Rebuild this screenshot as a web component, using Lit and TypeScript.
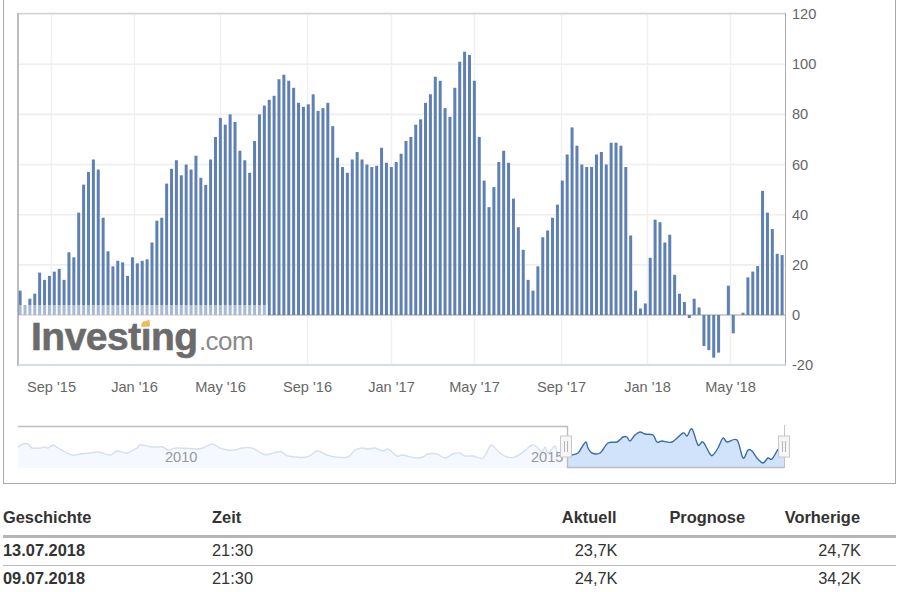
import { LitElement, html, css, svg } from "lit";
import { customElement } from "lit/decorators.js";

// wochenwerte, von links nach rechts
const VALUES = [
  9.7, 4, 6.5, 8.5, 16.9, 14, 15.6, 17.3, 18.4, 14, 25, 23, 40.8, 52, 57, 62, 58, 38.8, 25.4, 19.4,
  21.6, 21, 15.6, 23, 20.6, 21.6, 22.2, 28.9, 37.6, 38.8, 52.4, 58.3, 61.7, 55.7, 60, 58, 63.5, 54.7, 51.9, 62,
  71, 78.6, 75.9, 80, 77, 65.5, 61.7, 56.7, 69.4, 80, 83.5, 85.8, 87.4, 94, 95.8, 93.4, 90.6, 84.6, 83, 84,
  88, 81.4, 82.5, 84.6, 75.3, 62.7, 59, 56.7, 62, 65, 62, 60, 59, 59.5, 66.7, 60.7, 59, 61, 64.3, 69.4,
  71, 75.9, 78, 84.6, 88, 95, 93.4, 82.5, 79, 90.6, 101, 105, 103.7, 93.4, 71, 53.6, 43, 51, 61, 65.5,
  60.7, 46.4, 35, 26, 14, 9.7, 19.4, 31, 33.7, 38.8, 44, 53.6, 64, 74.8, 67.5, 60, 59, 59, 64, 65,
  60, 68.7, 68.7, 67.5, 59, 31.7, 9.7, 2.6, 4.6, 22.8, 38, 37, 28.9, 32, 16, 8.5, 5.2, -1.2, 6.5, 3,
  -12.4, -14, -17, -15, 0, 11.7, -7.3, 0, 0.9, 15, 17.3, 19.5, 49.5, 40.8, 34.3, 24.4, 23.9,
];

const Y_LABELS = [120, 100, 80, 60, 40, 20, 0, -20];
const X_TICKS: [number, string][] = [
  [51.5, "Sep '15"],
  [134.5, "Jan '16"],
  [220.5, "May '16"],
  [307.5, "Sep '16"],
  [391.5, "Jan '17"],
  [474.5, "May '17"],
  [561.5, "Sep '17"],
  [647.5, "Jan '18"],
  [730.5, "May '18"],
];

const OLD_LINE: number[][] = [
  [18, 447], [23, 444], [28, 444], [32, 448], [40, 448], [45, 447], [48, 448], [53, 445], [58, 448], [72, 455],
  [80, 454], [90, 453], [98, 452], [110, 455], [117, 451], [127, 453], [137, 448], [140, 445], [147, 446], [152, 447],
  [157, 447], [163, 447], [168, 450], [177, 448], [197, 449], [203, 448], [212, 444], [220, 448], [227, 450], [235, 450],
  [242, 448], [252, 448], [263, 454], [270, 454], [277, 452], [282, 452], [288, 456], [307, 457], [317, 451], [327, 455],
  [335, 457], [348, 457], [355, 450], [362, 448], [368, 449], [375, 448], [383, 451], [388, 449], [397, 456], [403, 455],
  [415, 458], [423, 457], [428, 454], [437, 454], [445, 458], [453, 454], [460, 453], [465, 456], [473, 456], [483, 458],
  [490, 446], [493, 446], [500, 453], [507, 457], [515, 457], [523, 452], [532, 445], [537, 447], [542, 452], [545, 447],
  [548, 453], [555, 446], [558, 453], [567, 450],
];
const NEW_LINE: number[][] = [
  [567, 456], [572, 455], [578, 453], [582, 447], [586, 442], [588, 448], [592, 453], [600, 453], [608, 443], [617, 442],
  [623, 437], [627, 437], [630, 441], [635, 435], [640, 432], [645, 434], [653, 435], [657, 442], [662, 441], [672, 442],
  [683, 433], [687, 436], [692, 429], [698, 445], [703, 442], [710, 454], [713, 455], [718, 448], [723, 438], [727, 442],
  [737, 440], [743, 458], [748, 450], [752, 451], [757, 458], [763, 463], [768, 458], [772, 459], [778, 449],
];

const ROWS = [
  ["13.07.2018", "21:30", "23,7K", "", "24,7K"],
  ["09.07.2018", "21:30", "24,7K", "", "34,2K"],
];

const ZERO = 315;
const UNIT = 2.508;

// catmull-rom, damit die linie im navigator weich wird
function smooth(p: number[][]) {
  let d = `M${p[0][0]},${p[0][1]}`;
  for (let i = 0; i < p.length - 1; i++) {
    const a = p[Math.max(i - 1, 0)];
    const b = p[i];
    const c = p[i + 1];
    const e = p[Math.min(i + 2, p.length - 1)];
    const c1x = b[0] + (c[0] - a[0]) / 6;
    const c1y = b[1] + (c[1] - a[1]) / 6;
    const c2x = c[0] - (e[0] - b[0]) / 6;
    const c2y = c[1] - (e[1] - b[1]) / 6;
    d += ` C${c1x},${c1y} ${c2x},${c2y} ${c[0]},${c[1]}`;
  }
  return d;
}

@customElement("app-root")
export class AppRoot extends LitElement {
  static styles = css`
    :host {
      display: block;
      width: 902px;
      height: 592px;
      overflow: hidden;
      background: #fff;
      font-family: "Liberation Sans", Arial, sans-serif;
      color: #333;
    }
    .frame {
      margin-left: 3px;
      width: 891px;
      height: 483px;
      border: 1px solid #aaa;
      border-top: none;
    }
    .frame svg {
      display: block;
    }
    .axis {
      font-size: 14.6px;
      fill: #666;
    }
    .year {
      font-size: 14.6px;
      fill: #999;
    }
    .logo-main {
      font-size: 39px;
      font-weight: 700;
      fill: #6b6b6b;
      stroke: #6b6b6b;
      stroke-width: 0.6px;
      letter-spacing: -0.5px;
    }
    .logo-com {
      font-size: 26px;
      fill: #8a8a8a;
      letter-spacing: -0.6px;
    }
    .table {
      margin: 19px 6px 0 3px;
      font-size: 16.4px;
    }
    .row {
      display: grid;
      grid-template-columns: 209px 276px 129.5px 128.5px 115px;
      align-items: center;
      height: 25px;
      padding-bottom: 2px;
      border-bottom: 1px solid #bbb;
    }
    .row.head {
      height: 29px;
      padding-bottom: 3px;
      font-weight: 700;
      border-bottom: 3px solid #b5b5b5;
    }
    .head .num {
      padding-right: 1px;
    }
    .num {
      text-align: right;
    }
    .date {
      font-weight: 700;
    }
  `;

  private renderChart() {
    const step = (782 - 20) / (VALUES.length - 1);
    return svg`
      ${Y_LABELS.map((v) => {
        const y = ZERO - v * UNIT;
        return svg`<line x1="18" x2="785" y1=${y} y2=${y} stroke="#eeeeee" stroke-width="1.6"></line>`;
      })}
      ${X_TICKS.map(
        ([x]) => svg`<line x1=${x} x2=${x} y1="14" y2="365" stroke="#f0f0f0" stroke-width="1.4"></line>`
      )}
      <line x1="18" x2="785" y1="13.5" y2="13.5" stroke="#d4d4d4" stroke-width="1.6"></line>
      <line x1="18" x2="18" y1="13" y2="366" stroke="#bdbdbd" stroke-width="2"></line>
      <line x1="785.5" x2="785.5" y1="13" y2="366" stroke="#aaaaaa"></line>
      <line x1="18" x2="786" y1="365" y2="365" stroke="#ccd6e4" stroke-width="1.6"></line>
      <line x1="18" x2="785" y1=${ZERO} y2=${ZERO} stroke="#aaaaaa" stroke-width="1"></line>
      ${VALUES.map((v, i) => {
        const h = Math.abs(v) * UNIT;
        const y = v >= 0 ? ZERO - h : ZERO;
        return svg`<rect x=${18.6 + i * step} y=${y} width="3" height=${h} fill="#5f80b2"></rect>`;
      })}
      <rect x="19" y="305" width="249" height="11" fill="#fff" fill-opacity="0.45"></rect>
      <rect x="19" y="316" width="249" height="48" fill="#fff" fill-opacity="0.9"></rect>
      <text class="logo-main" x="31" y="350">Investing</text>
      <polygon points="141.5,323 149.5,319.5 149.5,325.5 141.5,327" fill="#f5bb4d"></polygon>
      <text class="logo-com" x="199" y="350">.com</text>
      ${Y_LABELS.map(
        (v) => svg`<text class="axis" x="792" y=${ZERO - v * UNIT + 5}>${v}</text>`
      )}
      ${X_TICKS.map(
        ([x, label]) => svg`<text class="axis" x=${x} y="391.5" text-anchor="middle">${label}</text>`
      )}
    `;
  }

  private renderNavigator() {
    const handle = (x: number) => svg`
      <rect x=${x} y="436" width="11" height="21" fill="#f6f6f6" stroke="#c8c8c8"></rect>
      <line x1=${x + 4} x2=${x + 4} y1="441" y2="452" stroke="#b5b5b5"></line>
      <line x1=${x + 7} x2=${x + 7} y1="441" y2="452" stroke="#b5b5b5"></line>
    `;
    const oldLine = smooth(OLD_LINE);
    const newLine = smooth(NEW_LINE);
    return svg`
      <path d="${oldLine} L567,468 L18,468 Z" fill="#f5f8fe"></path>
      <path d=${oldLine} fill="none" stroke="#d5e0ee" stroke-width="1.4"></path>
      <path d="${newLine} L784,446 L784,468 L567,468 Z" fill="#d0e3fa"></path>
      <path d=${newLine} fill="none" stroke="#3a6ca8" stroke-width="1.4"></path>
      <polyline points="18,426.5 567.5,426.5 567.5,467.5 784.5,467.5" fill="none" stroke="#bdbdbd" stroke-width="1.4"></polyline>
      <line x1="784.5" x2="784.5" y1="425" y2="468" stroke="#c4c4c4"></line>
      <text class="year" x="165" y="462">2010</text>
      <text class="year" x="531" y="462">2015</text>
      ${handle(560.5)}
      ${handle(778.5)}
    `;
  }

  render() {
    return html`
      <div class="frame">
        <svg width="891" height="483" viewBox="4 0 891 483">
          ${this.renderChart()} ${this.renderNavigator()}
        </svg>
      </div>
      <div class="table">
        <div class="row head">
          <div>Geschichte</div>
          <div>Zeit</div>
          <div class="num">Aktuell</div>
          <div class="num">Prognose</div>
          <div class="num">Vorherige</div>
        </div>
        ${ROWS.map(
          (r) => html`
            <div class="row">
              <div class="date">${r[0]}</div>
              <div>${r[1]}</div>
              <div class="num">${r[2]}</div>
              <div class="num">${r[3]}</div>
              <div class="num">${r[4]}</div>
            </div>
          `
        )}
      </div>
    `;
  }
}
